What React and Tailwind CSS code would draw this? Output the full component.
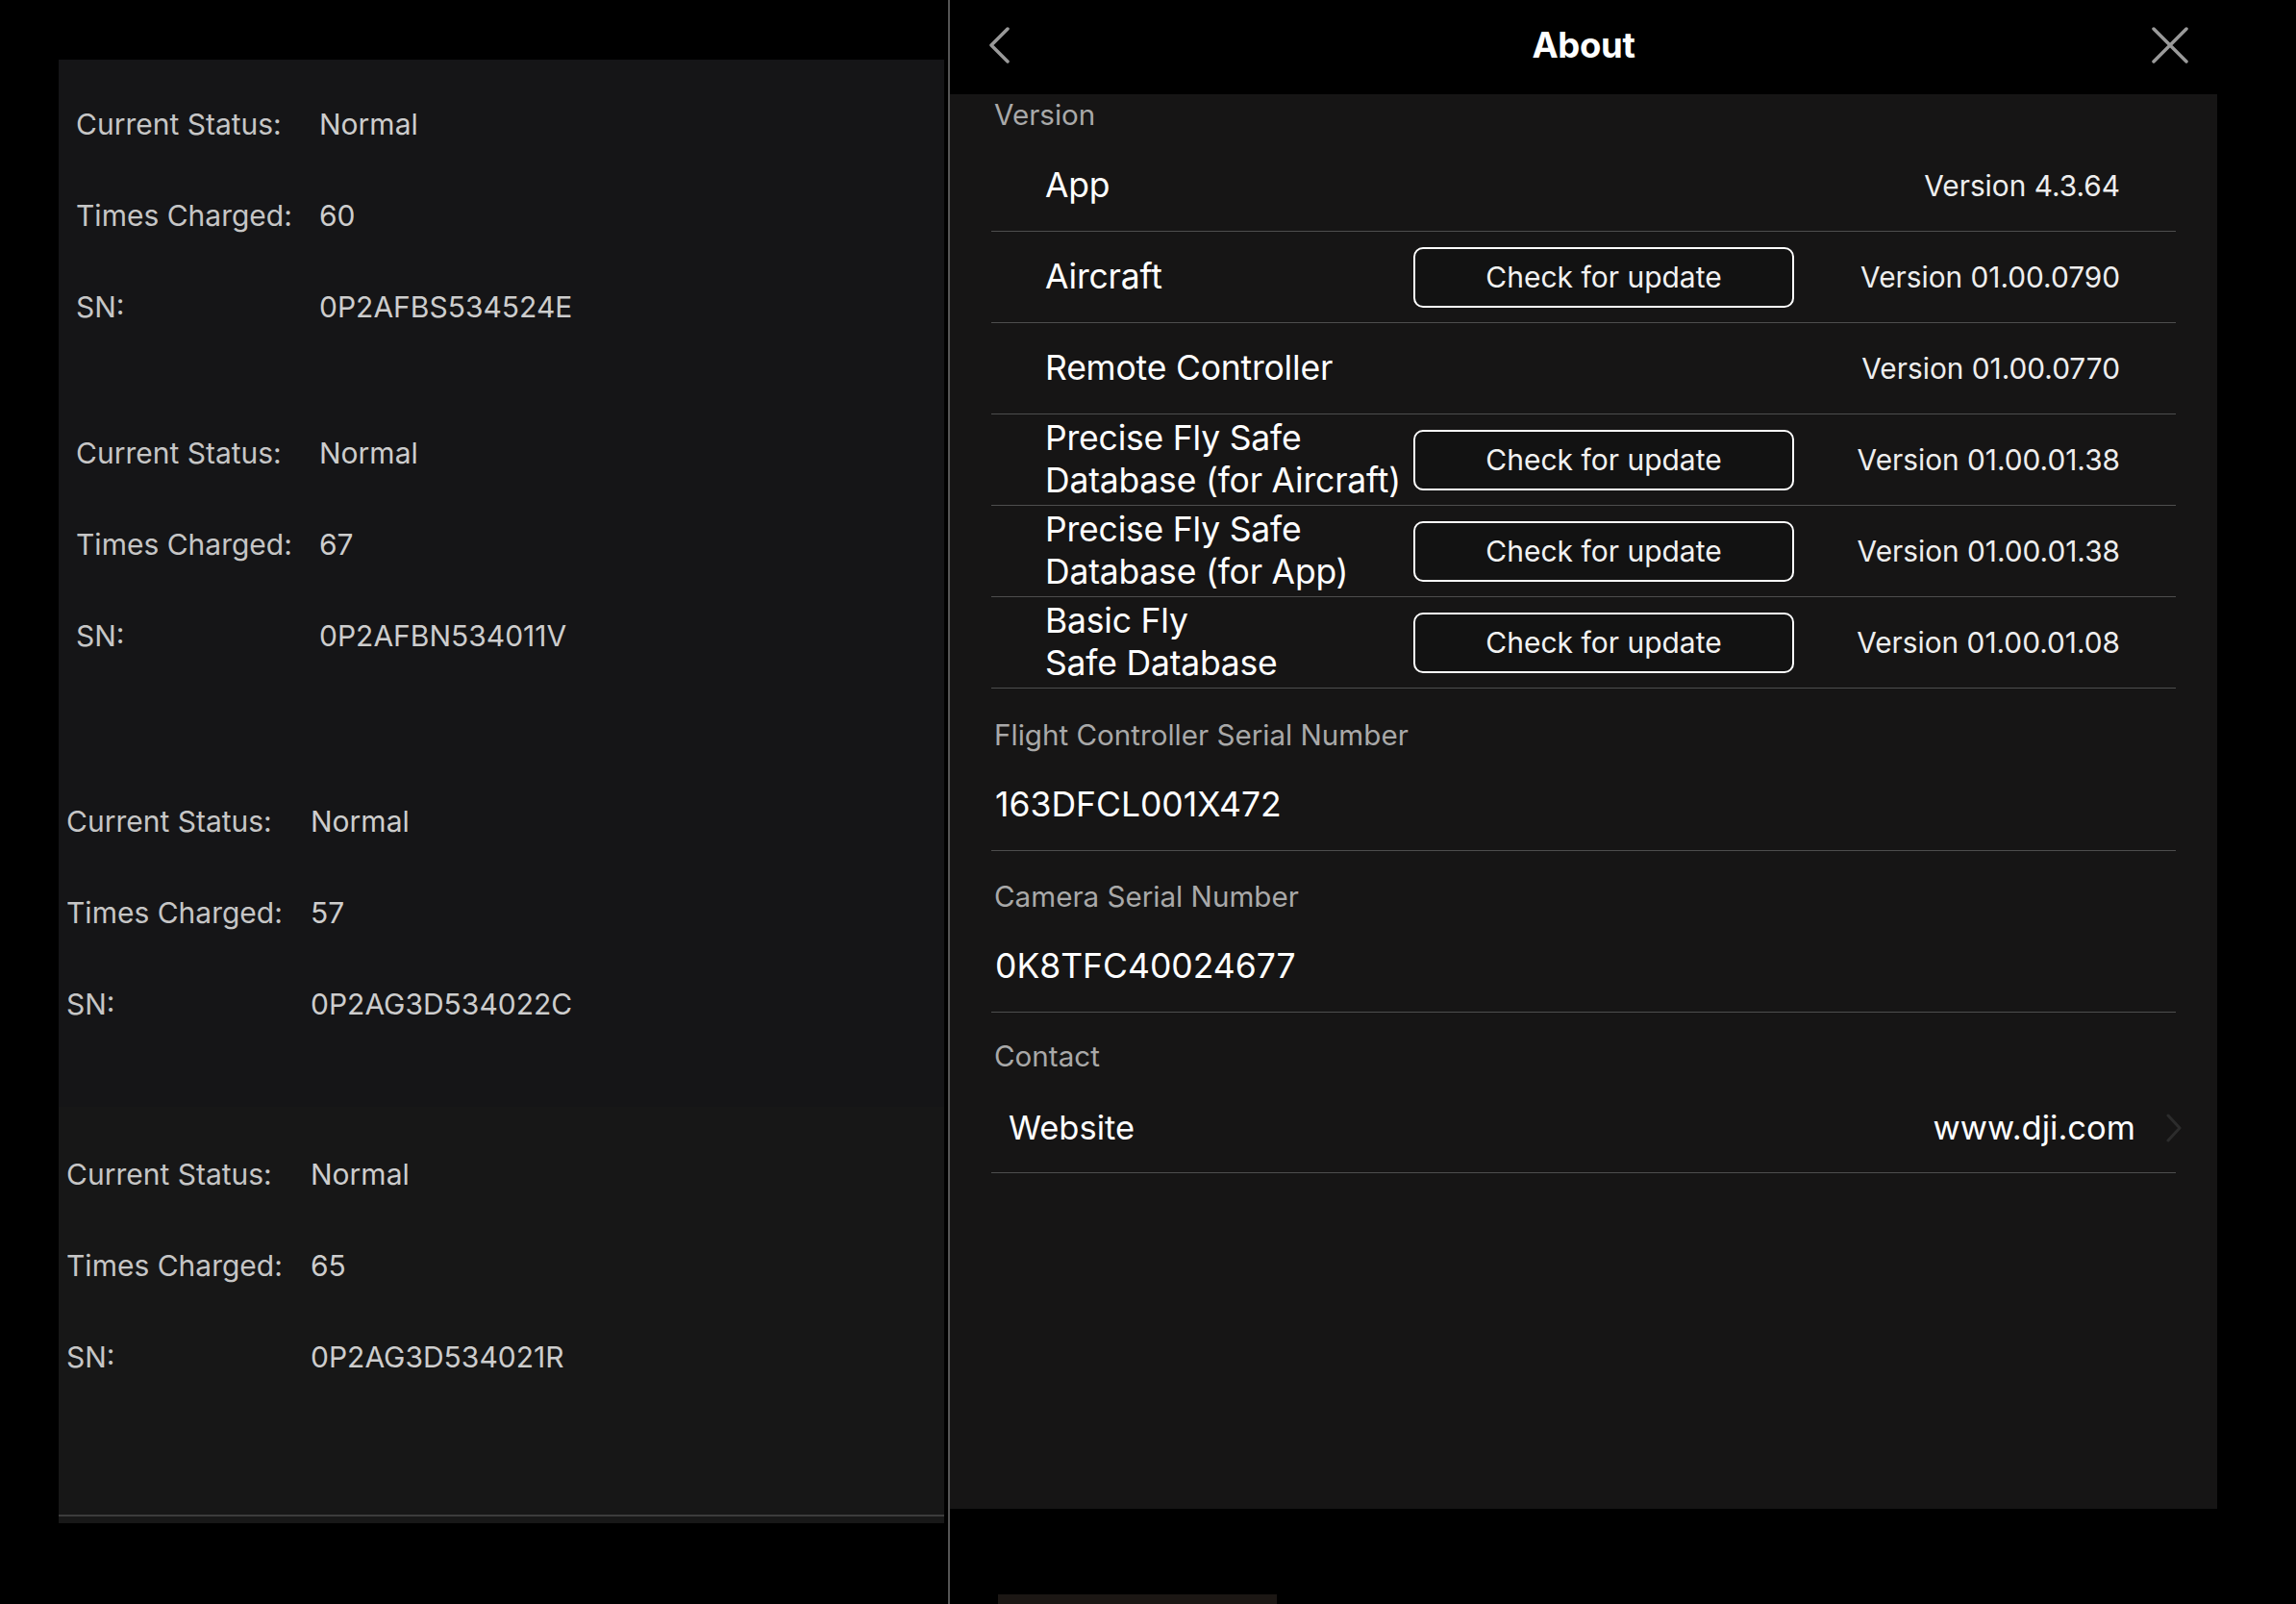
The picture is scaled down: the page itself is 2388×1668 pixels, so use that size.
import React from 'react';

const batteries = [
  { status: 'Normal', charged: '60', sn: '0P2AFBS534524E', shift: false, gap: 'mt-[19px]' },
  { status: 'Normal', charged: '67', sn: '0P2AFBN534011V', shift: false, gap: 'mt-[57px]' },
  { status: 'Normal', charged: '57', sn: '0P2AG3D534022C', shift: true, gap: 'mt-[98px]' },
];

const lastBattery = { status: 'Normal', charged: '65', sn: '0P2AG3D534021R', shift: true };

const versions = [
  { name: ['App'], button: false, version: 'Version 4.3.64' },
  { name: ['Aircraft'], button: true, version: 'Version 01.00.0790' },
  { name: ['Remote Controller'], button: false, version: 'Version 01.00.0770' },
  { name: ['Precise Fly Safe', 'Database (for Aircraft)'], button: true, version: 'Version 01.00.01.38' },
  { name: ['Precise Fly Safe', 'Database (for App)'], button: true, version: 'Version 01.00.01.38' },
  { name: ['Basic Fly', 'Safe Database'], button: true, version: 'Version 01.00.01.08' },
];

function BatteryBlock({ battery, className }) {
  const rows = [
    ['Current Status:', battery.status],
    ['Times Charged:', battery.charged],
    ['SN:', battery.sn],
  ];
  return (
    <div className={className}>
      {rows.map(([label, value]) => (
        <div key={label} className={'flex items-center h-[95px] ' + (battery.shift ? 'pl-[8px]' : 'pl-[18px]')}>
          <span className={'text-[#c6c6c6] ' + (battery.shift ? 'w-[254px]' : 'w-[253px]')}>{label}</span>
          <span className="text-[#cdcdcd]">{value}</span>
        </div>
      ))}
    </div>
  );
}

function SectionLabel({ children, className = '' }) {
  return <div className={'pl-[3px] text-[29.6px] leading-[32px] text-[#a9a9a9] ' + className}>{children}</div>;
}

export default function App() {
  return (
    <div
      className="w-[2388px] h-[1668px] bg-black flex overflow-hidden"
      style={{ fontFamily: 'Inter, "Noto Sans", "Liberation Sans", sans-serif' }}
    >
      {/* left: battery list */}
      <div className="w-[986px] shrink-0 pt-[62px]">
        <div className="ml-[61px] w-[921px] text-[30px] leading-[36px]">
          <div className="h-[1089px] bg-[#151517] flex flex-col">
            {batteries.map((b) => (
              <BatteryBlock key={b.sn} battery={b} className={b.gap} />
            ))}
          </div>
          <div className="h-[424px] bg-[#171717] pt-[22px]">
            <BatteryBlock battery={lastBattery} />
          </div>
          <div className="h-[2px] bg-[#3c3c3c]" />
          <div className="h-[7px] bg-[#181818]" />
        </div>
      </div>

      <div className="w-[2px] shrink-0 bg-[#555555]" />

      {/* right: about */}
      <div className="flex-1 flex flex-col">
        <div className="w-[1318px] h-[98px] pb-[4px] grid grid-cols-[1fr_auto_1fr] items-center">
          <div className="pl-[40px] flex">
            <svg width="24" height="38" viewBox="0 0 24 38" fill="none">
              <path d="M20 2 L3 19 L20 36" stroke="#9a9a9a" strokeWidth="3.5" strokeLinecap="round" strokeLinejoin="round" />
            </svg>
          </div>
          <div className="text-white text-[36.5px] font-bold tracking-[-0.3px]">About</div>
          <div className="pr-[30px] flex justify-end">
            <svg width="38" height="38" viewBox="0 0 38 38" fill="none">
              <path d="M2 2 L36 36 M36 2 L2 36" stroke="#9a9a9a" strokeWidth="3.5" strokeLinecap="round" />
            </svg>
          </div>
        </div>

        <div className="w-[1318px] h-[1471px] bg-[#161515] px-[43px]">
          <SectionLabel className="pt-[5px] h-[48px]">Version</SectionLabel>

          {versions.map((v, i) => (
            <div key={i} className="h-[95px] border-b border-[#4d4d4d] flex items-center pl-[56px] pr-[58px]">
              <div className="w-[383px] text-[35.5px] leading-[44px] text-white tracking-[-0.2px]">
                {v.name.map((line) => (
                  <div key={line} className="whitespace-nowrap">{line}</div>
                ))}
              </div>
              {v.button ? (
                <button className="w-[396px] h-[63px] border-2 border-white rounded-[10px] text-[30px] text-[#f2f2f2] bg-[#121212]">
                  Check for update
                </button>
              ) : null}
              <div className="flex-1 text-right text-[29.8px] text-[#eeeeee]">{v.version}</div>
            </div>
          ))}

          <div className="border-b border-[#4d4d4d] pt-[32px] pb-[27px]">
            <SectionLabel>Flight Controller Serial Number</SectionLabel>
            <div className="mt-[37px] pl-[4px] text-[35.5px] leading-[40px] text-white">163DFCL001X472</div>
          </div>

          <div className="border-b border-[#4d4d4d] pt-[31px] pb-[27px]">
            <SectionLabel>Camera Serial Number</SectionLabel>
            <div className="mt-[37px] pl-[4px] text-[35.5px] leading-[40px] text-white">0K8TFC40024677</div>
          </div>

          <SectionLabel className="pt-[29px]">Contact</SectionLabel>
          <div className="mt-[12px] h-[94px] border-b border-[#4d4d4d] flex items-center pl-[18px]">
            <div className="flex-1 text-[34.5px] text-white">Website</div>
            <div className="text-[34.5px] text-white">www.dji.com</div>
            <svg className="ml-[31px] mr-[-7px]" width="18" height="30" viewBox="0 0 18 30" fill="none">
              <path d="M3 2 L15 15 L3 28" stroke="#2c2c2c" strokeWidth="3" strokeLinecap="round" strokeLinejoin="round" />
            </svg>
          </div>
        </div>

        <div className="mt-[89px] ml-[50px] w-[290px] h-[10px] bg-[#1c1714]" />
      </div>
    </div>
  );
}
